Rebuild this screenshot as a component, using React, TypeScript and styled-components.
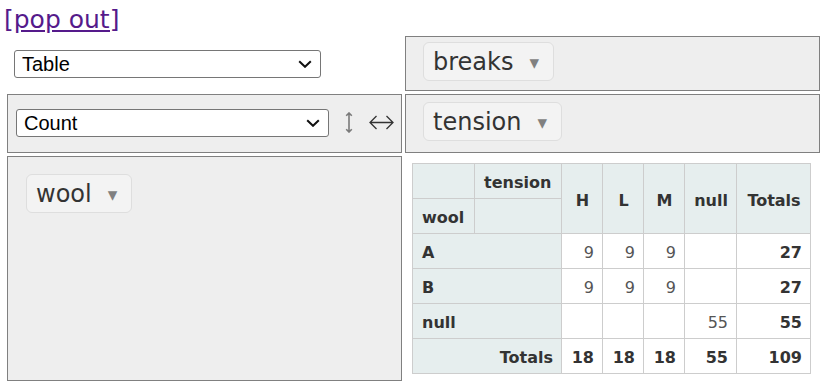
import React from 'react';
import styled, { createGlobalStyle } from 'styled-components';

const Global = createGlobalStyle`
  html, body { margin: 0; padding: 0; background: #fff; }
  body { font-family: "DejaVu Sans", Verdana, sans-serif; }
`;

const Page = styled.div`
  width: 834px;
  height: 387px;
  overflow: hidden;
`;

const Header = styled.div`
  height: 36px;
  box-sizing: border-box;
  padding: 5px 0 0 4px;
`;

const PopOut = styled.a`
  font-family: "DejaVu Sans", Verdana, sans-serif;
  font-size: 25px;
  line-height: 29px;
  color: #551a8b;
  text-decoration: underline;
`;

const Grid = styled.div`
  display: grid;
  grid-template-columns: 395px 415px;
  grid-template-rows: 55px 59px 225px;
  gap: 3px;
  margin-left: 7px;
`;

const RendererCell = styled.div`
  display: flex;
  align-items: center;
  padding-left: 7px;
`;

const Panel = styled.div<{ $pad: string; $center?: boolean }>`
  box-sizing: border-box;
  border: 1px solid #808080;
  background: #eeeeee;
  display: flex;
  align-items: ${(p) => (p.$center ? 'center' : 'flex-start')};
  padding: ${(p) => p.$pad};
`;

const SelectWrap = styled.div`
  position: relative;
  display: inline-flex;
`;

const Select = styled.select<{ $w: number }>`
  appearance: none;
  -webkit-appearance: none;
  width: ${(p) => p.$w}px;
  height: 28px;
  box-sizing: border-box;
  font-family: "Liberation Sans", Arial, sans-serif;
  font-size: 20px;
  color: #000;
  background: #fff;
  border: 1px solid #767676;
  border-radius: 3px;
  padding: 0 30px 0 7px;
`;

const Chevron = styled.svg`
  position: absolute;
  right: 9px;
  top: 10px;
  pointer-events: none;
`;

const SortRow = styled.span`
  display: inline-flex;
  align-items: center;
  margin-left: 16px;
  gap: 16px;
`;

const Chip = styled.span`
  display: inline-flex;
  align-items: center;
  height: 39px;
  box-sizing: border-box;
  padding: 1px 14px 0 9px;
  border: 1px solid #dedede;
  background: #f3f3f3;
  border-radius: 6px;
  font-family: "DejaVu Sans", Verdana, sans-serif;
  font-size: 24px;
  color: #333;
  white-space: nowrap;
`;

const Triangle = styled.span`
  margin-left: 16px;
  font-size: 19px;
  color: #808080;
`;

const OutputCell = styled.div`
  padding: 7px 0 0 7px;
  background: #fff;
`;

const PivotTable = styled.table`
  border-collapse: collapse;
  table-layout: fixed;
  width: 398px;
  font-family: "DejaVu Sans", Verdana, sans-serif;
  font-size: 16px;
  text-align: left;
`;

const Th = styled.th<{ $align?: string }>`
  background: #e6eeee;
  border: 1px solid #cdcdcd;
  padding: 9px 8px 5px 9px;
  line-height: 20px;
  font-weight: bold;
  color: #333;
  text-align: ${(p) => p.$align || 'left'};
  vertical-align: middle;
  white-space: nowrap;
`;

const Td = styled.td<{ $bold?: boolean }>`
  background: #fff;
  border: 1px solid #cdcdcd;
  padding: 9px 8px 5px;
  line-height: 20px;
  color: ${(p) => (p.$bold ? '#333' : '#555')};
  font-weight: ${(p) => (p.$bold ? 'bold' : 'normal')};
  text-align: right;
  vertical-align: top;
`;

const colWidths = [62, 87, 41, 41, 41, 52, 74];
const cols = ['H', 'L', 'M', 'null'];
const rows: { label: string; vals: (number | null)[]; total: number }[] = [
  { label: 'A', vals: [9, 9, 9, null], total: 27 },
  { label: 'B', vals: [9, 9, 9, null], total: 27 },
  { label: 'null', vals: [null, null, null, 55], total: 55 },
];
const colTotals = [18, 18, 18, 55];

function Dropdown({ width, value }: { width: number; value: string }) {
  return (
    <SelectWrap>
      <Select $w={width} defaultValue={value}>
        <option>{value}</option>
      </Select>
      <Chevron width="14" height="8" viewBox="0 0 14 8">
        <path d="M1.2 1.2 L7 6.8 L12.8 1.2" fill="none" stroke="#111" strokeWidth="2" />
      </Chevron>
    </SelectWrap>
  );
}

function RowOrderIcon() {
  return (
    <svg width="8" height="21" viewBox="0 0 8 21">
      <path
        d="M4 1 V20 M1.2 3.8 L4 1 L6.8 3.8 M1.2 17.2 L4 20 L6.8 17.2"
        fill="none"
        stroke="#7a7a7a"
        strokeWidth="1.6"
      />
    </svg>
  );
}

function ColOrderIcon() {
  return (
    <svg width="25" height="15" viewBox="0 0 25 15">
      <path
        d="M1 7.5 H24 M7.5 1 L1 7.5 L7.5 14 M17.5 1 L24 7.5 L17.5 14"
        fill="none"
        stroke="#333"
        strokeWidth="1.3"
      />
    </svg>
  );
}

export default function App() {
  return (
    <Page>
      <Global />
      <Header>
        <PopOut href="#">[pop out]</PopOut>
      </Header>
      <Grid>
        <RendererCell>
          <Dropdown width={307} value="Table" />
        </RendererCell>
        <Panel $pad="5px 0 0 17px">
          <Chip>
            breaks<Triangle>▾</Triangle>
          </Chip>
        </Panel>
        <Panel $pad="0 0 2px 8px" $center>
          <Dropdown width={313} value="Count" />
          <SortRow>
            <RowOrderIcon />
            <ColOrderIcon />
          </SortRow>
        </Panel>
        <Panel $pad="7px 0 0 17px">
          <Chip>
            tension<Triangle>▾</Triangle>
          </Chip>
        </Panel>
        <Panel $pad="17px 0 0 18px">
          <Chip>
            wool<Triangle>▾</Triangle>
          </Chip>
        </Panel>
        <OutputCell>
          <PivotTable>
            <colgroup>
              {colWidths.map((w, i) => (
                <col key={i} style={{ width: w }} />
              ))}
            </colgroup>
            <thead>
              <tr>
                <Th />
                <Th>tension</Th>
                {cols.map((c) => (
                  <Th key={c} rowSpan={2} $align="center">
                    {c}
                  </Th>
                ))}
                <Th rowSpan={2} $align="center">
                  Totals
                </Th>
              </tr>
              <tr>
                <Th>wool</Th>
                <Th />
              </tr>
            </thead>
            <tbody>
              {rows.map((r) => (
                <tr key={r.label}>
                  <Th colSpan={2}>{r.label}</Th>
                  {r.vals.map((v, i) => (
                    <Td key={i}>{v ?? ''}</Td>
                  ))}
                  <Td $bold>{r.total}</Td>
                </tr>
              ))}
              <tr>
                <Th colSpan={2} $align="right">
                  Totals
                </Th>
                {colTotals.map((v, i) => (
                  <Td key={i} $bold>
                    {v}
                  </Td>
                ))}
                <Td $bold>109</Td>
              </tr>
            </tbody>
          </PivotTable>
        </OutputCell>
      </Grid>
    </Page>
  );
}
